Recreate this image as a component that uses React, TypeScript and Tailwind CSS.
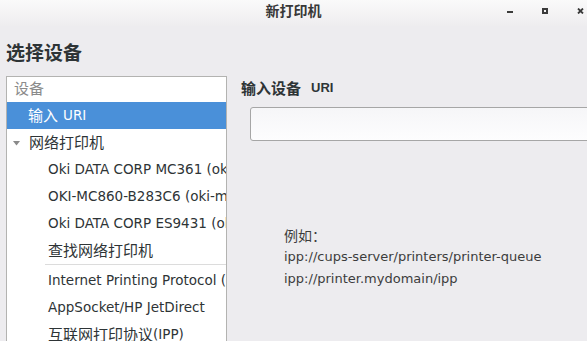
import { type ReactNode } from 'react'

const latin = "font-['DejaVu_Sans','Noto_Sans_CJK_SC',sans-serif]"

function Zh({ children }: { children: ReactNode }) {
  return <span className="text-[15px] font-['Noto_Sans_CJK_SC',sans-serif]">{children}</span>
}

function Row({ children }: { children: ReactNode }) {
  return (
    <div className="flex h-[27px] items-center whitespace-nowrap pl-[41px] text-[#2e3436]">
      {children}
    </div>
  )
}

function WindowControls() {
  return (
    <div className="absolute right-[2px] top-[8px] flex items-center gap-[29px] pr-[1px]">
      {/* minimise */}
      <svg width="6" height="6" viewBox="0 0 6 6">
        <rect x="0" y="3" width="6" height="2" fill="#3b3b3b" />
      </svg>
      {/* maximise */}
      <svg width="6" height="6" viewBox="0 0 6 6">
        <rect x="1" y="1" width="4" height="4" fill="none" stroke="#3b3b3b" strokeWidth="2" />
      </svg>
      {/* close */}
      <svg width="7" height="6" viewBox="0 0 7 6">
        <path d="M1 0.5 L6 5.5 M6 0.5 L1 5.5" stroke="#3b3b3b" strokeWidth="1.8" />
      </svg>
    </div>
  )
}

export default function App() {
  return (
    <div className={`flex h-[341px] w-[587px] flex-col overflow-hidden bg-[#edecef] ${latin}`}>
      {/* title bar */}
      <div className="relative flex h-[26px] shrink-0 items-start justify-center bg-gradient-to-b from-[#fafafa] to-[#eeedef]">
        <span className="mt-[1px] text-[14px] font-bold leading-[18px] text-[#383838] font-['Noto_Sans_CJK_SC',sans-serif]">
          新打印机
        </span>
        <WindowControls />
      </div>

      {/* heading */}
      <div className="pl-[6px] pt-[13px] text-[19px] font-bold leading-[26px] text-[#2e3436] font-['Noto_Sans_CJK_SC',sans-serif]">
        选择设备
      </div>

      <div className="mt-[11px] flex items-start">
        {/* device list */}
        <div className="ml-[6px] h-[290px] w-[221px] shrink-0 overflow-hidden border border-[#b3b3b1] bg-white text-[13.5px]">
          <div className="flex h-[25px] items-center pb-[3px] pl-[7px] text-[#8b8b8b]">
            <Zh>设备</Zh>
          </div>
          <div className="flex h-[27px] items-center whitespace-nowrap bg-[#4a90d9] pl-[21px] text-white">
            <Zh>输入</Zh>
            <span className="ml-[5px]">URI</span>
          </div>
          <div className="flex h-[27px] items-center whitespace-nowrap pl-[6px] text-[#2e3436]">
            <svg width="7" height="5" viewBox="0 0 7 5" className="mt-[1px]">
              <path d="M0 0 H7 L3.5 4.5 Z" fill="#8a8a8a" />
            </svg>
            <span className="ml-[9px]">
              <Zh>网络打印机</Zh>
            </span>
          </div>
          <Row>Oki DATA CORP MC361 (oki-mc361)</Row>
          <Row>OKI-MC860-B283C6 (oki-mc860)</Row>
          <Row>Oki DATA CORP ES9431 (oki-es9431)</Row>
          <Row>
            <Zh>查找网络打印机</Zh>
          </Row>
          <div className="ml-[38px] h-px bg-[#dcdcdc]" />
          <div className="h-[2px]" />
          <Row>Internet Printing Protocol (ipps)</Row>
          <Row>AppSocket/HP JetDirect</Row>
          <Row>
            <Zh>互联网打印协议</Zh>
            <span>(IPP)</span>
          </Row>
        </div>

        {/* URI entry */}
        <div className="flex min-w-0 flex-col pl-[14px]">
          <div className="flex h-[24px] items-center whitespace-nowrap text-[#2e3436]">
            <span className="text-[15px] font-bold font-['Noto_Sans_CJK_SC',sans-serif]">输入设备</span>
            <span className="ml-[10px] text-[13px] font-bold font-['Liberation_Sans',sans-serif]">URI</span>
          </div>
          <input
            type="text"
            className="ml-[9px] mt-[7px] h-[34px] w-[360px] rounded-[3px] border border-[#a6a6a6] bg-gradient-to-b from-[#f6f6f8] to-[#fdfdfe] outline-none"
          />
          <div className="ml-[43px] mt-[83px] whitespace-nowrap text-[13px] leading-[22px] text-[#3c3c3c]">
            <div className="font-['Noto_Sans_CJK_SC',sans-serif] text-[14px]">例如：</div>
            <div>ipp://cups-server/printers/printer-queue</div>
            <div>ipp://printer.mydomain/ipp</div>
          </div>
        </div>
      </div>
    </div>
  )
}
